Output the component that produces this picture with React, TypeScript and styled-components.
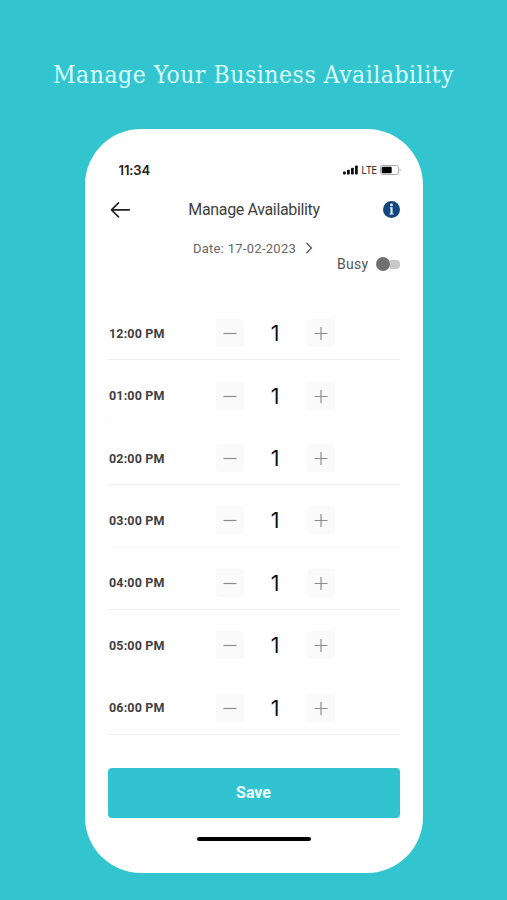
import React from "react";
import styled, { createGlobalStyle } from "styled-components";

const GlobalStyle = createGlobalStyle`
  *, *::before, *::after { box-sizing: border-box; }
  body { margin: 0; background: #32c5d0; }
  button { font: inherit; border: 0; padding: 0; background: none; cursor: pointer; }
  svg { display: block; }
`;

const Page = styled.main`
  height: 900px;
  display: flex;
  flex-direction: column;
  align-items: center;
  background: #32c5d0;
  font-family: Roboto, sans-serif;
  color: #3f3f3f;
  overflow: hidden;
`;

const Headline = styled.h1`
  height: 129px;
  margin: 0;
  padding-top: 57px;
  font: 400 24.5px/36px "DejaVu Serif Condensed", "DejaVu Serif", serif;
  font-stretch: condensed;
  letter-spacing: 0.5px;
  white-space: nowrap;
  color: #d9ffff;
`;

const Phone = styled.section`
  width: 338px;
  height: 744px;
  flex: none;
  padding: 0 23px;
  border-radius: 56px;
  background: #fff;
  display: flex;
  flex-direction: column;
`;

const StatusBar = styled.div`
  height: 20px;
  margin: 31px -1px 0 0;
  padding-left: 11px;
  display: flex;
  align-items: center;
  justify-content: space-between;
`;

const Clock = styled.span`
  font: 600 13px/20px Inter, sans-serif;
  letter-spacing: -0.1px;
  color: #222;
`;

const Signals = styled.div`
  display: flex;
  align-items: center;
  gap: 3px;
  font: 400 10.5px/20px "Open Sans", sans-serif;
  letter-spacing: -0.6px;
  color: #222;
`;

const Header = styled.header`
  height: 24px;
  margin-top: 17px;
  display: grid;
  grid-template-columns: 24px 1fr 17px;
  align-items: center;
`;

const Title = styled.h2`
  margin: 0;
  padding: 1px 6px 0 0;
  text-align: center;
  font-size: 16px;
  line-height: 24px;
  font-weight: 400;
  letter-spacing: -0.35px;
`;

const DateButton = styled.button`
  height: 20px;
  margin: 17px 1px 0 0;
  align-self: center;
  display: flex;
  align-items: center;
  gap: 9px;
  font-size: 13px;
  letter-spacing: 0.28px;
  color: #666;
`;

const BusyRow = styled.div`
  height: 20px;
  margin-top: -4px;
  display: flex;
  align-items: center;
  justify-content: flex-end;
  gap: 7px;
  font-size: 14px;
  letter-spacing: 0.3px;
  color: #555;
`;

const Switch = styled.button`
  width: 24px;
  height: 14px;
  display: flex;
  align-items: center;
  &::before {
    content: "";
    width: 14px;
    height: 14px;
    border-radius: 50%;
    background: #707070;
  }
  &::after {
    content: "";
    width: 10px;
    height: 9px;
    border-radius: 0 4px 4px 0;
    background: #c8c8c8;
  }
`;

const Slots = styled.ul`
  list-style: none;
  margin: 24px 0 0;
  padding: 0;
  height: 437px;
  display: grid;
  grid-template-rows: repeat(7, 1fr);
`;

const Slot = styled.li<{ $line: string }>`
  display: grid;
  grid-template-columns: 108px 28px 63px 28px;
  align-items: center;
  padding-top: 9px;
  border-bottom: 1px solid ${(p) => p.$line};
`;

const Time = styled.span`
  padding-left: 1.5px;
  font-size: 12.5px;
  font-weight: 700;
  letter-spacing: 0.15px;
  white-space: nowrap;
`;

const Step = styled.button`
  width: 28px;
  height: 28px;
  border-radius: 3px;
  background: #fafafa;
  display: grid;
  place-items: center;
`;

const Count = styled.span`
  text-align: center;
  font: 400 21.5px/28px Inter, sans-serif;
  color: #111;
`;

const Save = styled.button`
  && {
    height: 50px;
    margin-top: 33px;
    padding-bottom: 2px;
    border-radius: 4px;
    background: #32c3d1;
    color: #f0ffff;
    font-size: 16px;
    font-weight: 700;
  }
`;

const HomeBar = styled.div`
  width: 114px;
  height: 4px;
  margin: 19px auto 0;
  border-radius: 2px;
  background: #000;
`;

const SignalIcon = () => (
  <svg width="15" height="10" viewBox="0 0 15 10" fill="#111">
    <rect x="0" y="6.5" width="2.8" height="3" rx=".8" />
    <rect x="4" y="4.8" width="2.8" height="4.7" rx=".8" />
    <rect x="8" y="2.8" width="2.8" height="6.7" rx=".8" />
    <rect x="12" y="0.5" width="2.8" height="9" rx=".8" />
  </svg>
);

const BatteryIcon = () => (
  <svg width="21" height="10" viewBox="0 0 21 10">
    <rect x=".5" y=".5" width="18" height="9" rx="2.3" fill="#fff" stroke="#aaa" />
    <rect x="1.7" y="1.7" width="10" height="6.6" rx="1" fill="#000" />
    <path d="M19.7 3.5v3c1.3-.6 1.3-2.4 0-3Z" fill="#aaa" />
  </svg>
);

const BackIcon = () => (
  <svg width="24" height="20" viewBox="0 0 24 20" fill="none" stroke="#222" strokeWidth="1.6" strokeLinecap="round" strokeLinejoin="round">
    <path d="M21.3 9.9H3.5M10.5 2.9l-7 7 7 7" />
  </svg>
);

const InfoIcon = () => (
  <svg width="17" height="17" viewBox="0 0 17 17">
    <circle cx="8.5" cy="8.5" r="8.5" fill="#12467d" />
    <path d="M6.7 6.2h2.9v6.3h1v1.1H6.5v-1.1h1V7.3h-.8Z" fill="#e4f3ff" />
    <circle cx="8.5" cy="3.9" r="1.4" fill="#e4f3ff" />
  </svg>
);

const ChevronIcon = () => (
  <svg width="8" height="12" viewBox="0 0 8 12" fill="none" stroke="#555" strokeWidth="1.3">
    <path d="m1.5 1 5 5-5 5" />
  </svg>
);

const StepIcon = ({ plus = false }: { plus?: boolean }) => (
  <svg width="14" height="14" viewBox="0 0 14 14" fill="none" stroke="#8d8d8d" strokeWidth="1.2">
    <path d={plus ? "M.5 7.5h13M7 1v13" : "M.5 7.5h13"} />
  </svg>
);

const slots = [
  { time: "12:00 PM", line: "#eeeeee" },
  { time: "01:00 PM", line: "#f9f9f9" },
  { time: "02:00 PM", line: "#eeeeee" },
  { time: "03:00 PM", line: "#f9f9f9" },
  { time: "04:00 PM", line: "#f0f0f0" },
  { time: "05:00 PM", line: "#fefefe" },
  { time: "06:00 PM", line: "#f0f0f0" },
];

export default function App() {
  return (
    <Page>
      <GlobalStyle />
      <Headline>Manage Your Business Availability</Headline>
      <Phone>
        <StatusBar>
          <Clock>11:34</Clock>
          <Signals>
            <SignalIcon />
            LTE
            <BatteryIcon />
          </Signals>
        </StatusBar>
        <Header>
          <button aria-label="Back"><BackIcon /></button>
          <Title>Manage Availability</Title>
          <button aria-label="Information"><InfoIcon /></button>
        </Header>
        <DateButton>
          Date: 17-02-2023
          <ChevronIcon />
        </DateButton>
        <BusyRow>
          Busy
          <Switch role="switch" aria-checked={false} aria-label="Busy" />
        </BusyRow>
        <Slots>
          {slots.map(({ time, line }) => (
            <Slot key={time} $line={line}>
              <Time>{time}</Time>
              <Step aria-label="Decrease"><StepIcon /></Step>
              <Count>1</Count>
              <Step aria-label="Increase"><StepIcon plus /></Step>
            </Slot>
          ))}
        </Slots>
        <Save>Save</Save>
        <HomeBar />
      </Phone>
    </Page>
  );
}
